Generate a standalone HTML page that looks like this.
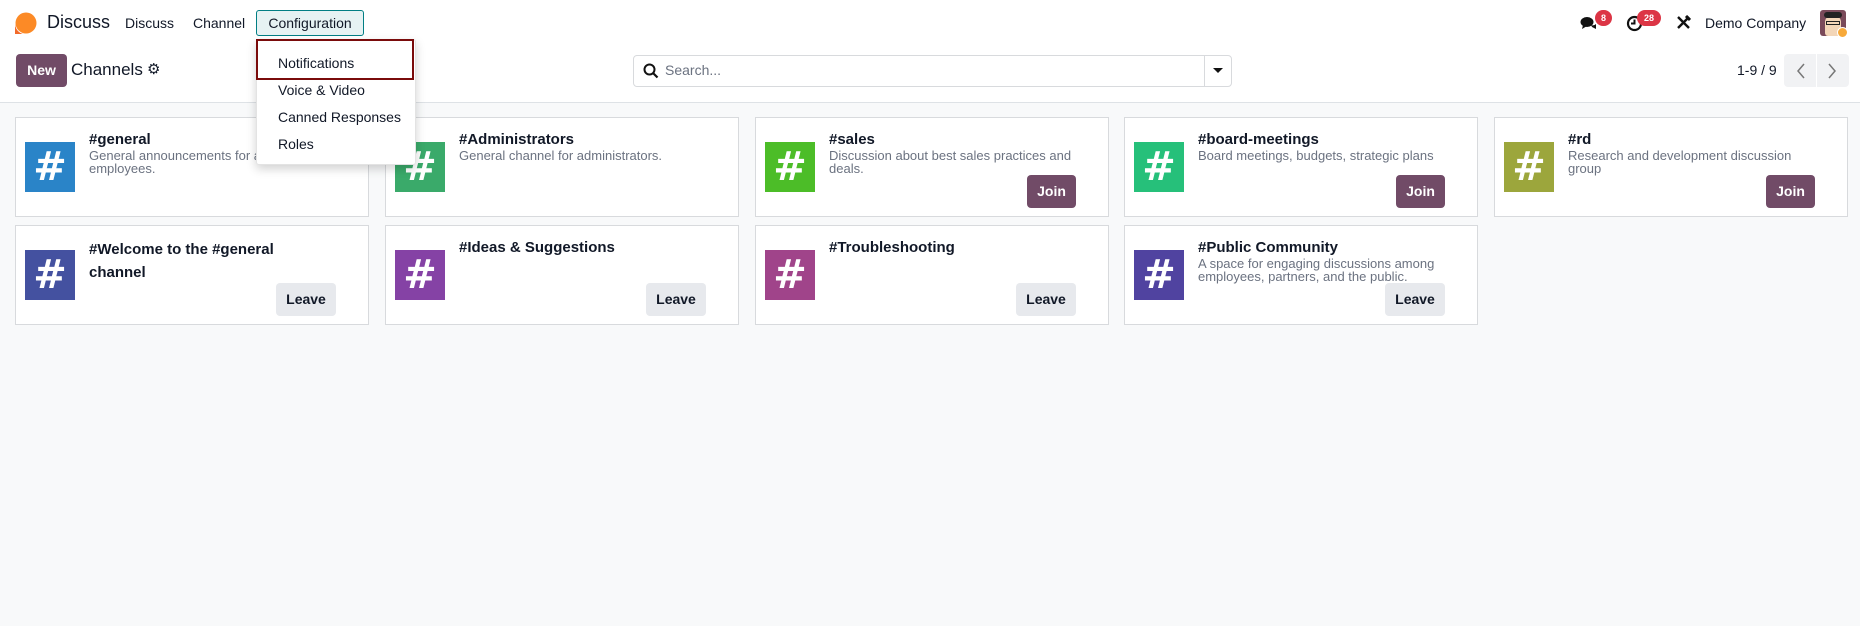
<!DOCTYPE html>
<html><head><meta charset="utf-8"><style>
*{box-sizing:border-box;margin:0;padding:0}
body{width:1860px;height:626px;background:#f8f9fa;font-family:"Liberation Sans",sans-serif;color:#212529;position:relative;overflow:hidden}
.nav{position:absolute;left:0;top:0;width:1860px;height:47px;background:#fff}
.cp{position:absolute;left:0;top:47px;width:1860px;height:56px;background:#fff;border-bottom:1px solid #dee2e6}
.a{position:absolute;white-space:nowrap}
.dd{z-index:10}
.card{position:absolute;width:354px;height:100px;background:#fff;border:1px solid #d8dadd}
.ic{position:absolute;left:9px;top:24px;width:50px;height:50px;color:#fff;font-family:"DejaVu Sans",sans-serif;font-size:40px;font-weight:bold;text-align:center;line-height:50px}
.t{position:absolute;left:73px;top:12px;font-size:15px;font-weight:bold;color:#111827;line-height:20px;width:240px}
.d{position:absolute;left:73px;top:31px;font-size:13px;color:#6b7280;line-height:13px;width:250px}
.join{position:absolute;right:32px;top:57px;width:49px;height:33px;background:#714b67;color:#fff;border-radius:4px;font-size:14px;font-weight:bold;text-align:center;line-height:33px}
.leave{position:absolute;right:32px;top:57px;width:60px;height:33px;background:#e7e9ed;color:#111827;border-radius:4px;font-size:14px;font-weight:bold;text-align:center;line-height:33px}
.badge{position:absolute;background:#dc3545;color:#fff;font-size:9px;border-radius:8px;height:16px;line-height:16px;text-align:center;font-weight:bold}
</style></head><body>
<div class="nav"></div>
<div class="cp"></div>
<svg class="a" style="left:15px;top:12px" width="22" height="22" viewBox="0 0 22 22"><circle cx="11" cy="11" r="10.5" fill="#fc8a26"/><path d="M0 22 L0 12 A11 11 0 0 0 14 22Z" fill="#f26a2a"/></svg>
<div class="a" style="left:47px;top:12px;font-size:18px;color:#111827">Discuss</div>
<div class="a" style="left:125px;top:15px;font-size:14px;color:#111827">Discuss</div>
<div class="a" style="left:193px;top:15px;font-size:14px;color:#111827">Channel</div>
<div class="a" style="left:256px;top:10px;width:108px;height:26px;background:#e6f2f3;border:1px solid #017e84;border-radius:3px;font-size:14px;color:#111827;text-align:center;line-height:24px">Configuration</div>
<div class="a dd" style="left:256px;top:39px;width:160px;height:126px;background:#fff;box-shadow:0 4px 10px rgba(0,0,0,.18);border:1px solid #e3e3e3;border-radius:3px">
<div class="a" style="left:-1px;top:-1px;width:158px;height:41px;border:2px solid #7a0b0b"></div>
<div class="a" style="left:21px;top:15px;font-size:14px;color:#111827">Notifications</div>
<div class="a" style="left:21px;top:42px;font-size:14px;color:#111827">Voice &amp; Video</div>
<div class="a" style="left:21px;top:69px;font-size:14px;color:#111827">Canned Responses</div>
<div class="a" style="left:21px;top:96px;font-size:14px;color:#111827">Roles</div>
</div>

<div class="a" style="left:16px;top:54px;width:51px;height:33px;background:#714b67;color:#fff;border-radius:4px;font-size:14px;font-weight:bold;text-align:center;line-height:33px">New</div>
<div class="a" style="left:71px;top:60px;font-size:17px;color:#111827">Channels</div>
<div class="a" style="left:147px;top:60px;font-size:15px;color:#111827">⚙</div>

<div class="a" style="left:633px;top:55px;width:599px;height:32px;border:1px solid #d8dadd;border-radius:4px;background:#fff"></div>
<div class="a" style="left:1204px;top:55px;width:1px;height:32px;background:#d8dadd"></div>
<svg class="a" style="left:643px;top:63px" width="16" height="16" viewBox="0 0 16 16"><circle cx="6.5" cy="6.5" r="5" fill="none" stroke="#111" stroke-width="2"/><path d="M10 10 L14.5 14.5" stroke="#111" stroke-width="2.2"/></svg>
<div class="a" style="left:665px;top:62px;font-size:14px;color:#6b7280">Search...</div>
<svg class="a" style="left:1213px;top:68px" width="10" height="6"><path d="M0 0H10L5 5Z" fill="#111"/></svg>

<div class="a" style="left:1737px;top:62px;font-size:14px;color:#111827">1-9 / 9</div>
<div class="a" style="left:1784px;top:54px;width:65px;height:33px;background:#f1f2f4;border-radius:4px"></div>
<div class="a" style="left:1816px;top:54px;width:1px;height:33px;background:#fff"></div>
<svg class="a" style="left:1795px;top:63px" width="12" height="16"><path d="M9 1 L3 8 L9 15" fill="none" stroke="#777" stroke-width="1.5"/></svg>
<svg class="a" style="left:1826px;top:63px" width="12" height="16"><path d="M3 1 L9 8 L3 15" fill="none" stroke="#777" stroke-width="1.5"/></svg>

<svg class="a" style="left:1580px;top:14px" width="18" height="18" viewBox="0 0 18 18"><ellipse cx="7" cy="8" rx="6.5" ry="5" fill="#111"/><path d="M3 11 L2 15 L7 12Z" fill="#111"/><path d="M11 11 Q14 12 16 10 L16 15 L12 13Z" fill="#111"/></svg>
<div class="badge" style="left:1595px;top:10px;width:17px">8</div>
<svg class="a" style="left:1626px;top:15px" width="17" height="17" viewBox="0 0 17 17"><circle cx="8.5" cy="8.5" r="6.5" fill="none" stroke="#111" stroke-width="2.2"/><path d="M8.5 4.5V8.5H5" fill="none" stroke="#111" stroke-width="2"/></svg>
<div class="badge" style="left:1637px;top:10px;width:24px">28</div>
<svg class="a" style="left:1676px;top:15px" width="15" height="15" viewBox="0 0 15 15"><path d="M2 2 L13 13 M13 2 L2 13" stroke="#111" stroke-width="2.4"/><path d="M10 1 L14 5" stroke="#111" stroke-width="3"/></svg>
<div class="a" style="left:1705px;top:15px;font-size:14px;color:#111827">Demo Company</div>
<div class="a" style="left:1820px;top:10px;width:26px;height:26px;background:#7a4a5a;border-radius:3px;overflow:hidden"><div style="position:absolute;left:5px;top:6px;width:16px;height:20px;background:#f3d6b8;border-radius:6px 6px 3px 3px"></div><div style="position:absolute;left:4px;top:2px;width:18px;height:6px;background:#222;border-radius:3px"></div><div style="position:absolute;left:6px;top:11px;width:14px;height:4px;border:1px solid #222"></div></div>
<div class="a" style="left:1837px;top:27px;width:11px;height:11px;border-radius:50%;background:#f7a93a;border:1px solid #fff"></div>

<div class="card" style="left:15px;top:117px"><div class="ic" style="background:#2a84c8">#</div><div class="t">#general</div><div class="d">General announcements for all<br>employees.</div></div>
<div class="card" style="left:385px;top:117px"><div class="ic" style="background:#3aaa6a">#</div><div class="t">#Administrators</div><div class="d">General channel for administrators.</div></div>
<div class="card" style="left:755px;top:117px"><div class="ic" style="background:#4cbd28">#</div><div class="t">#sales</div><div class="d">Discussion about best sales practices and deals.</div><div class="join">Join</div></div>
<div class="card" style="left:1124px;top:117px"><div class="ic" style="background:#26c07a">#</div><div class="t">#board-meetings</div><div class="d">Board meetings, budgets, strategic plans</div><div class="join">Join</div></div>
<div class="card" style="left:1494px;top:117px"><div class="ic" style="background:#9ca63c">#</div><div class="t">#rd</div><div class="d">Research and development discussion group</div><div class="join">Join</div></div>

<div class="card" style="left:15px;top:225px"><div class="ic" style="background:#4451a0">#</div><div class="t" style="line-height:23px">#Welcome to the #general channel</div><div class="leave">Leave</div></div>
<div class="card" style="left:385px;top:225px"><div class="ic" style="background:#8542a5">#</div><div class="t">#Ideas &amp; Suggestions</div><div class="leave">Leave</div></div>
<div class="card" style="left:755px;top:225px"><div class="ic" style="background:#a0448a">#</div><div class="t">#Troubleshooting</div><div class="leave">Leave</div></div>
<div class="card" style="left:1124px;top:225px"><div class="ic" style="background:#5043a0">#</div><div class="t">#Public Community</div><div class="d">A space for engaging discussions among employees, partners, and the public.</div><div class="leave">Leave</div></div>
</body></html>
